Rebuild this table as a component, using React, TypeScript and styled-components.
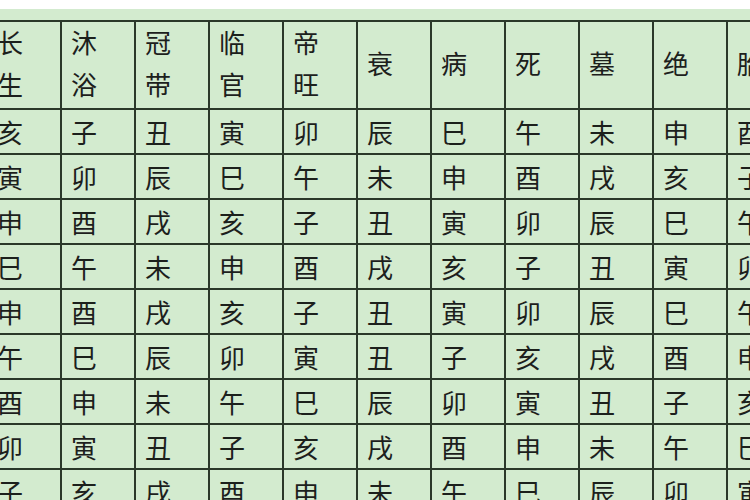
import React from "react";
import styled, { createGlobalStyle } from "styled-components";

const GlobalStyle = createGlobalStyle`
  html, body {
    margin: 0;
    padding: 0;
    background: #ffffff;
    overflow: hidden;
  }
  body {
    width: 750px;
    height: 500px;
  }
`;

const headers: string[][] = [
  ["长", "生"],
  ["沐", "浴"],
  ["冠", "带"],
  ["临", "官"],
  ["帝", "旺"],
  ["衰"],
  ["病"],
  ["死"],
  ["墓"],
  ["绝"],
  ["胎"],
  ["养"],
];

const rows: string[] = [
  "亥子丑寅卯辰巳午未申酉戌",
  "寅卯辰巳午未申酉戌亥子丑",
  "申酉戌亥子丑寅卯辰巳午未",
  "巳午未申酉戌亥子丑寅卯辰",
  "申酉戌亥子丑寅卯辰巳午未",
  "午巳辰卯寅丑子亥戌酉申未",
  "酉申未午巳辰卯寅丑子亥戌",
  "卯寅丑子亥戌酉申未午巳辰",
  "子亥戌酉申未午巳辰卯寅丑",
];

function App() {
  return (
    <>
      <GlobalStyle />
      <Sheet>
        <Grid>
          {headers.map((h, i) => (
            <HeadCell key={"h" + i}>
              {h.map((c) => (
                <span key={c}>{c}</span>
              ))}
            </HeadCell>
          ))}
          {rows.map((r, ri) =>
            Array.from(r).map((c, ci) => <Cell key={ri + "-" + ci}>{c}</Cell>)
          )}
        </Grid>
      </Sheet>
    </>
  );
}

const Sheet = styled.div`
  margin-top: 9px;
  padding-top: 11px;
  height: 480px;
  background: #d3ebcf;
  overflow: hidden;
`;

const Grid = styled.div`
  display: grid;
  grid-template-columns: repeat(12, 72px);
  grid-template-rows: 86px repeat(9, 43px);
  gap: 2px;
  padding: 2px;
  margin-left: -14px;
  width: max-content;
  background: #2a3829;
  font-family: "Noto Sans CJK SC", "Noto Sans CJK JP", sans-serif;
  color: #1c201c;
`;

const Cell = styled.div`
  background: #d3ebcf;
  display: flex;
  align-items: center;
  padding-left: 9px;
  font-size: 26px;
  line-height: 43px;
`;

const HeadCell = styled(Cell)`
  flex-direction: column;
  align-items: flex-start;
  justify-content: center;
  padding-bottom: 6px;
  box-sizing: border-box;

  span {
    display: block;
    height: 42px;
  }
`;

export default App;
